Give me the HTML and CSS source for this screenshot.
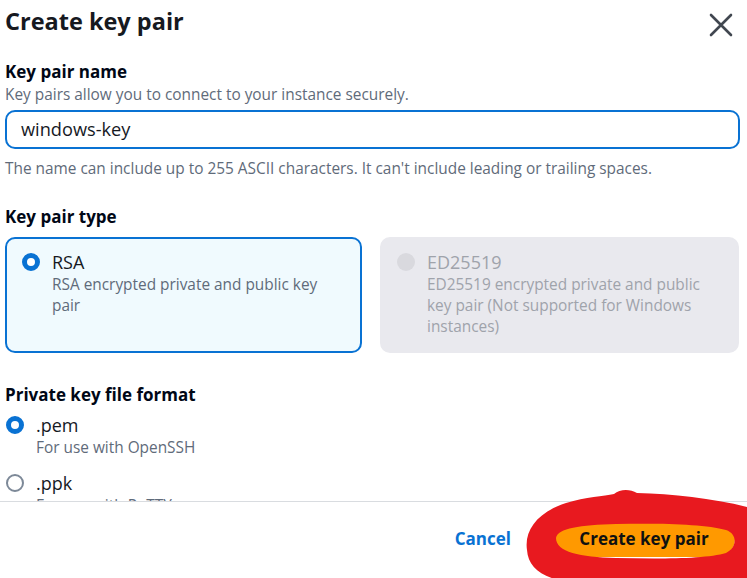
FILE: index.html
```html
<!DOCTYPE html>
<html lang="en">
<head>
<meta charset="utf-8">
<title>Create key pair</title>
<link rel="stylesheet" href="styles.css">
</head>
<body>
<div class="modal">
  <header class="head">
    <h1 class="title">Create key pair</h1>
    <button class="close" aria-label="Close">
      <svg width="24" height="24" viewBox="0 0 24 24"><path d="M2 2 L22 22 M22 2 L2 22" stroke="#414750" stroke-width="2.6" stroke-linecap="round" fill="none"/></svg>
    </button>
  </header>
  <div class="content">
    <section class="field">
      <div class="label">Key pair name</div>
      <div class="desc">Key pairs allow you to connect to your instance securely.</div>
      <div class="input">windows-key</div>
      <div class="hint">The name can include up to 255 ASCII characters. It can't include leading or trailing spaces.</div>
    </section>
    <section class="field type">
      <div class="label">Key pair type</div>
      <div class="cards">
        <div class="card selected">
          <span class="radio on"></span>
          <div class="opt">
            <div class="opt-title">RSA</div>
            <div class="opt-desc">RSA encrypted private and public key pair</div>
          </div>
        </div>
        <div class="card disabled">
          <span class="radio off-dis"></span>
          <div class="opt">
            <div class="opt-title">ED25519</div>
            <div class="opt-desc">ED25519 encrypted private and public key pair (Not supported for Windows instances)</div>
          </div>
        </div>
      </div>
    </section>
    <section class="field format">
      <div class="label">Private key file format</div>
      <div class="choice">
        <span class="radio on"></span>
        <div class="opt">
          <div class="opt-title">.pem</div>
          <div class="opt-desc">For use with OpenSSH</div>
        </div>
      </div>
      <div class="choice">
        <span class="radio off"></span>
        <div class="opt">
          <div class="opt-title">.ppk</div>
          <div class="opt-desc">For use with PuTTY</div>
        </div>
      </div>
    </section>
  </div>
  <footer class="foot">
    <button class="link">Cancel</button>
    <div class="primary-wrap">
      <button class="primary">Create key pair</button>
      <svg class="scribble" width="227" height="93" viewBox="0 0 227 93">
        <path fill="#e8191f" fill-rule="evenodd" d="M7 62 C4 42 18 24 46 15 C66 9 84 8 94 6 C100 1 110 1 117 5 C152 6 192 10 227 19 L227 93 L42 93 C20 88 8 78 7 62 Z M36 50 C38 40 60 37 96 36 C140 35 185 36 206 42 C218 46 217 60 206 65 C186 71 140 71 96 70 C60 69 36 64 36 50 Z"/>
      </svg>
    </div>
  </footer>
</div>
</body>
</html>
```
FILE: styles.css
```css
* { box-sizing: border-box; }
html, body { margin: 0; padding: 0; background: #fff; }
body {
  font-family: "Open Sans", "Noto Sans", sans-serif;
  color: #000716;
  width: 747px;
  height: 578px;
  overflow: hidden;
}
.modal {
  display: flex;
  flex-direction: column;
  height: 578px;
}
.head {
  display: flex;
  justify-content: space-between;
  align-items: flex-start;
  padding: 4px 14px 0 5px;
}
.title {
  margin: 0;
  font-size: 23.5px;
  line-height: 34px;
  font-weight: 700;
  color: #16191f;
}
.close {
  border: 0;
  background: none;
  padding: 0;
  margin-top: 9px;
  width: 24px;
  height: 24px;
}
.content {
  height: 463px;
  overflow: hidden;
  padding: 0 7px 0 5px;
}
.label {
  font-size: 17px;
  font-weight: 700;
  line-height: 24px;
  color: #000716;
}
.desc, .hint {
  font-size: 15.4px;
  line-height: 21px;
  color: #5f6b7a;
}
.field:first-child { margin-top: 22px; }
.input {
  margin-top: 5px;
  height: 39px;
  border: 2px solid #0972d3;
  border-radius: 10px;
  padding: 0 14px;
  font-size: 18.2px;
  line-height: 35px;
  color: #16191f;
}
.hint { margin-top: 9px; }
.type { margin-top: 26px; }
.cards {
  display: grid;
  grid-template-columns: 357px 359px;
  gap: 18px;
  margin-top: 8px;
}
.card {
  display: flex;
  gap: 12px;
  height: 116px;
  padding: 11px 14px 0 15px;
  border-radius: 10px;
  border: 2px solid transparent;
}
.card.selected { border-color: #0972d3; background: #f0fafe; }
.card.disabled { background: #e9e9ee; border-color: #e9e9ee; }
.radio {
  flex: none;
  width: 18px;
  height: 18px;
  border-radius: 50%;
  margin-top: 3px;
}
.radio.on { border: 5px solid #0972d3; background: #fff; }
.radio.off { border: 2px solid #7d8998; background: #fff; }
.radio.off-dis { background: #d9d9de; }
.opt-title {
  font-size: 18px;
  line-height: 24px;
  color: #16191f;
}
.opt-desc {
  font-size: 15.4px;
  line-height: 21px;
  color: #5f6b7a;
}
.disabled .opt-title, .disabled .opt-desc { color: #9fa3ab; }
.format { margin-top: 30px; }
.choice {
  display: flex;
  gap: 12px;
  margin-top: 6px;
  padding-left: 1px;
}
.choice + .choice { margin-top: 13px; }
.foot {
  flex: none;
  height: 77px;
  border-top: 1px solid #d9dce0;
  display: flex;
  justify-content: flex-end;
  align-items: center;
  gap: 42px;
  padding: 0 12px 3px 0;
  background: #fff;
}
.link {
  border: 0;
  background: none;
  padding: 0;
  font-family: inherit;
  font-size: 17px;
  font-weight: 700;
  color: #0972d3;
}
.primary-wrap { position: relative; display: flex; }
.primary {
  position: relative;
  border: 0;
  border-radius: 20px;
  background: #ff9900;
  color: #0f1111;
  font-family: inherit;
  font-size: 17px;
  font-weight: 700;
  padding: 0 24px;
  height: 36px;
  width: 182px;
}
.scribble {
  position: absolute;
  left: -33px;
  top: -33px;
}
```
